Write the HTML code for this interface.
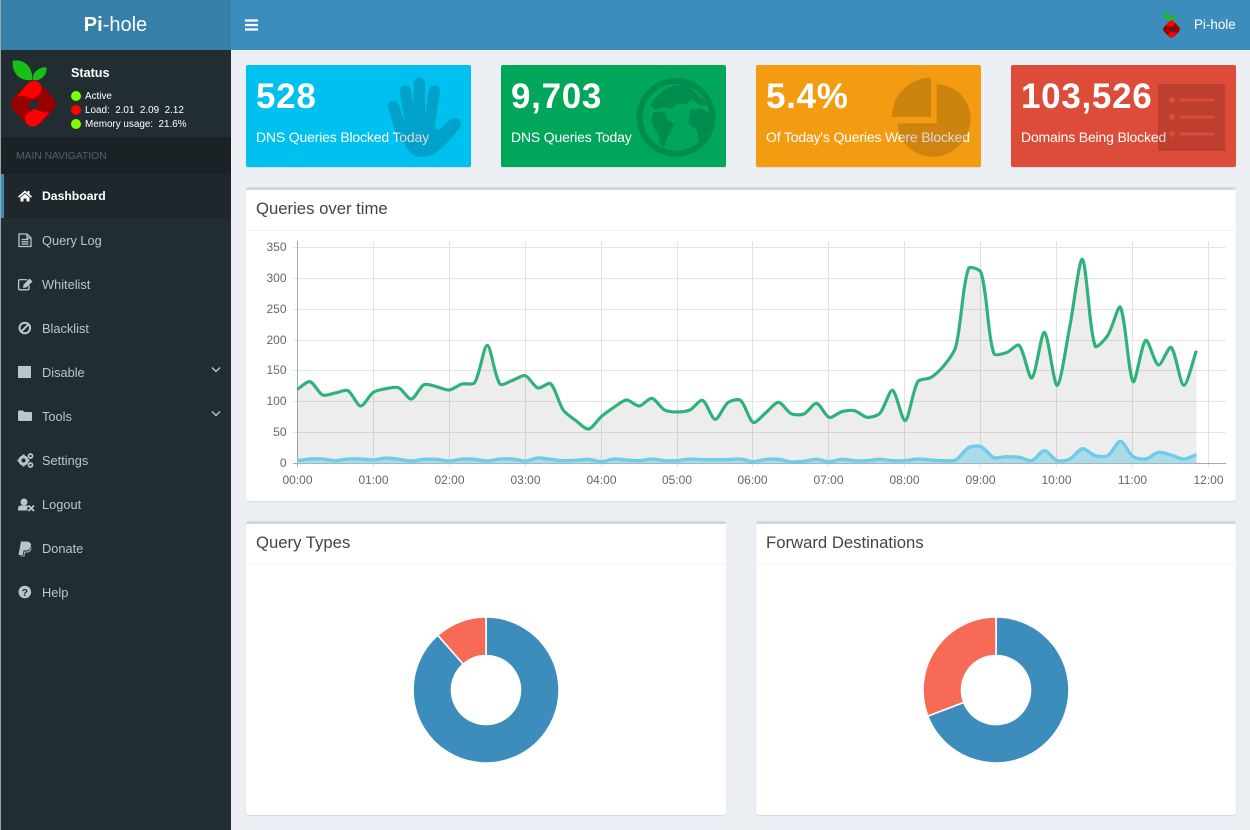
<!DOCTYPE html>
<html><head><meta charset="utf-8"><title>Pi-hole</title>
<style>
html,body{margin:0;padding:0;width:1250px;height:830px;overflow:hidden;background:#ecf0f5;font-family:"Liberation Sans",sans-serif}
div,span{position:absolute;white-space:nowrap}
#hdl{left:0;top:0;width:231px;height:50px;background:#367fa9}
#hdr{left:231px;top:0;width:1019px;height:50px;background:#3c8dbc}
#side{left:0;top:50px;width:231px;height:780px;background:#222d32}
#strip{left:0;top:0;width:1px;height:830px;background:#9aa3a8}
.brand{left:0;top:0;width:231px;text-align:center;line-height:50px;font-size:20px;color:#fff}
.nav{left:0;width:231px;height:44px;line-height:45px;font-size:12.8px;color:#b8c7ce;text-indent:42px}
.nav.a{background:#1e282c;color:#fff;font-weight:700;font-size:12.2px}
.card{top:65px;width:225px;height:102px;border-radius:2px;box-shadow:0 1px 1px rgba(0,0,0,.1);color:#fff}
.num{left:10px;top:12px;font-size:35px;line-height:40px;font-weight:700;letter-spacing:.7px}
.lbl{left:10px;top:63px;font-size:14px;line-height:18px;letter-spacing:-.17px}
.box{background:#fff;border-top:3px solid #d2d6de;border-radius:3px;box-shadow:0 1px 1px rgba(0,0,0,.1)}
.ttl{left:10px;top:9px;font-size:16.7px;line-height:20px;color:#444}
.hl{left:0;right:0;height:1px;background:#f4f4f4}
.st{left:85px;color:#fff;font-size:9.9px;line-height:12px;white-space:pre;font-weight:400;top:0}
.dot{left:71px;width:10px;height:10px;border-radius:50%}
svg{position:absolute;overflow:visible}
</style></head><body>
<div id="hdl"><div class="brand"><b>Pi</b>-hole</div></div>
<div id="hdr"></div>
<div id="side"></div>
<div id="strip"></div>

<svg style="left:245px;top:19px" width="14" height="12"><path d="M0 1.500h13M0 6h13M0 10.500h13" stroke="#fff" stroke-width="2.200"/></svg>
<div style="left:1194px;top:0;line-height:50px;font-size:13.4px;color:#fff">Pi-hole</div>

<svg width="0" height="0" style="left:0;top:0"><defs>
<g id="logo">
<path d="M38 32C75 25 100 55 96 90C60 95 35 70 38 32Z" fill="#17c017"/>
<path d="M140 52C115 50 96 70 98 90C124 94 140 76 140 52Z" fill="#17c017"/>
<rect x="44" y="106" width="112" height="112" rx="30" transform="rotate(45 100 162)" fill="#990000"/>
<path d="M52 138L84 100C96 88 114 90 122 104C130 120 120 136 104 142L97 148C85 140 70 136 52 138Z" fill="#ff0000"/>
<path d="M148 188L116 222C104 234 86 232 78 218C70 202 80 188 96 182L103 176C115 184 130 188 148 188Z" fill="#ff0000"/>
<path d="M100 146C106 152 112 155 119 158C113 165 112 172 113 178C107 177 96 176 90 180C90 172 87 165 84 160C90 157 96 152 100 146Z" fill="#2a2d30"/>
</g></defs></svg>
<svg style="left:0;top:50px" width="70" height="90" viewBox="0 0 210 270"><use href="#logo"/></svg>
<svg style="left:1159px;top:9.250px" width="26.250" height="33.750" viewBox="0 0 210 270"><use href="#logo"/></svg>

<div style="left:71px;top:64.500px;font-size:12.600px;font-weight:700;line-height:16px;color:#fff">Status</div>
<div class="dot" style="top:91px;background:#7fff00"></div>
<div class="dot" style="top:105px;background:#f00"></div>
<div class="dot" style="top:119px;background:#7fff00"></div>
<div class="st" style="top:91px">Active</div>
<div class="st" style="top:105px">Load:  2.01  2.09  2.12</div>
<div class="st" style="top:119px">Memory usage:  21.6%</div>

<div style="left:1px;top:137px;width:230px;height:37px;background:#1a2226;line-height:39px;font-size:10.300px;color:#4b646f;text-indent:15px">MAIN NAVIGATION</div>
<div class="nav a" style="top:174px;left:1px;width:230px;text-indent:41px">Dashboard</div>
<div style="left:1px;top:174px;width:3px;height:44px;background:#3c8dbc"></div>
<div class="nav" style="top:218px">Query Log</div>
<div class="nav" style="top:262px">Whitelist</div>
<div class="nav" style="top:306px">Blacklist</div>
<div class="nav" style="top:350px">Disable</div>
<div class="nav" style="top:394px">Tools</div>
<div class="nav" style="top:438px">Settings</div>
<div class="nav" style="top:482px">Logout</div>
<div class="nav" style="top:526px">Donate</div>
<div class="nav" style="top:570px">Help</div>

<svg style="left:0;top:0" width="231" height="620">
<path d="M25 190.500L18 196.500L19 197.700L25 192.700L31 197.700L32 196.500L29.500 194.400V191H27.500V192.700ZM20.500 197.500V201.500H23.500V198.500H26.500V201.500H29.500V197.500L25 193.800Z" fill="#fff"/>
<g fill="none" stroke="#b8c7ce" stroke-width="1.300">
<path d="M19 234H27L31 238V246.500H19ZM27 234V238H31M21.500 239.500H28.500M21.500 241.800H28.500M21.500 244H28.500"/>
<path d="M29 285V288.200Q29 289.800 27.300 289.800H20Q18.600 289.800 18.600 288.200V281Q18.600 279.600 20 279.600H27"/>
<circle cx="24.800" cy="328" r="5.300" stroke-width="2"/><path d="M21 331.800L28.600 324.200" stroke-width="2"/>
<path d="M212 367.500L216 371.500L220 367.500M212 411.500L216 415.500L220 411.500" stroke-width="1.400"/>
</g>
<g fill="#b8c7ce">
<path d="M23 288L23.600 284.600L29.500 278.500L32.500 281.500L26.400 287.400Z"/>
<rect x="18" y="366" width="13" height="12"/>
<path d="M18 411.500Q18 410.500 19 410.500H23L24.500 412H31Q32 412 32 413V420Q32 421 31 421H19Q18 421 18 420Z"/>
<circle cx="23.500" cy="460.500" r="3.600" fill="none" stroke="#b8c7ce" stroke-width="3"/>
<path d="M22.500 454.500h2v2h-2zM22.500 464.500h2v2h-2zM17.500 459.500h2v2h-2zM27.500 459.500h2v2h-2z"/>
<circle cx="30.500" cy="456" r="2" fill="none" stroke="#b8c7ce" stroke-width="1.700"/>
<circle cx="30.500" cy="465" r="2" fill="none" stroke="#b8c7ce" stroke-width="1.700"/>
<circle cx="24" cy="502" r="3.500"/>
<path d="M18 510.500V508.500Q18 505.500 21 505.500H27Q28.500 505.500 29 506.500L27 508L28 510.500Z"/>
<path d="M28.500 505.500L34 511M34 505.500L28.500 511" stroke="#b8c7ce" stroke-width="1.800"/>
<path d="M21 541.500H27Q31.500 542 31 546Q30 550.500 25.500 550.500H23.500L22.700 555H18.500Z"/>
<path d="M20.500 555.500H23.500L24.300 551.500H26Q30.500 551 31.200 546.800Q32 549 30.500 551Q29 552.800 26 552.800H25.200L24.500 556.500H20.200Z" opacity=".8"/>
<circle cx="24.800" cy="592" r="6.300"/>
</g>
<text x="24.800" y="595.800" font-family="Liberation Sans" font-size="10.500" font-weight="700" fill="#222d32" text-anchor="middle">?</text>
</svg>

<div class="card" style="left:246px;background:#00c0ef"><div class="num">528</div><div class="lbl">DNS Queries Blocked Today</div></div>
<div class="card" style="left:501px;background:#00a65a"><div class="num">9,703</div><div class="lbl">DNS Queries Today</div></div>
<div class="card" style="left:756px;background:#f39c12"><div class="num">5.4%</div><div class="lbl">Of Today's Queries Were Blocked</div></div>
<div class="card" style="left:1011px;background:#dd4b39"><div class="num">103,526</div><div class="lbl">Domains Being Blocked</div></div>

<svg style="left:240px;top:55px" width="500" height="120" viewBox="0 0 1500 360">
<g opacity=".15">
<g stroke="#000" stroke-width="34" stroke-linecap="round" fill="none">
<path d="M460 155L490 245M496 108L516 230M538 85V230M583 108L565 230M646 206L590 258"/>
</g>
<path d="M458 170L488 250C500 290 520 306 545 306C585 306 615 275 660 218L632 192L595 225L575 215L500 215L480 215Z" fill="#000"/>
<path fill-rule="evenodd" fill="#000" d="M1308 69A118 118 0 1 0 1308.100 69ZM1308 87A100 100 0 1 1 1307.900 87Z"/>
<path fill="#000" d="M1232 150C1245 125 1275 98 1310 90L1345 92L1395 140L1402 152L1378 150L1352 132L1340 148L1312 146L1296 160L1268 155L1245 165ZM1240 172L1272 170L1283 195L1304 208L1285 240L1272 278L1260 270L1255 240L1240 215L1234 195ZM1350 165L1385 160L1420 182L1415 235L1390 270L1378 268L1370 225L1345 205Z"/>
</g>
</svg>
<svg style="left:750px;top:55px" width="500" height="120" viewBox="0 0 1500 360">
<g opacity=".15" fill="#000">
<path d="M543 68V186H426C426 120 478 68 543 68Z"/>
<path d="M560 88C616 88 662 134 662 190C662 254 610 305 550 305C492 305 443 262 443 205H560Z"/>
<path fill-rule="evenodd" d="M1224 87H1426V288H1224ZM1290 131H1393V140H1290ZM1290 182H1393V191H1290ZM1290 233H1393V242H1290ZM1257 135A9 9 0 1 0 1275 135A9 9 0 1 0 1257 135ZM1257 186A9 9 0 1 0 1275 186A9 9 0 1 0 1257 186ZM1257 237A9 9 0 1 0 1275 237A9 9 0 1 0 1257 237Z"/>
</g>
</svg>

<div class="box" style="left:246px;top:187px;width:990px;height:311px"><div class="ttl">Queries over time</div><div class="hl" style="top:40px"></div></div>
<div class="box" style="left:246px;top:521px;width:480px;height:291px"><div class="ttl">Query Types</div><div class="hl" style="top:40px"></div></div>
<div class="box" style="left:756px;top:521px;width:480px;height:291px"><div class="ttl">Forward Destinations</div><div class="hl" style="top:40px"></div></div>

<svg style="left:0;top:0" width="1250" height="830" font-family="Liberation Sans" font-size="12" fill="#666">
<g stroke="#e5e5e5" stroke-width="1">
<path d="M293 247.500H1226M293 278.500H1226M293 309.500H1226M293 340.500H1226M293 370.500H1226M293 401.500H1226M293 432.500H1226"/>
</g>
<g stroke="#e2e2e2" stroke-width="1">
<path d="M373.500 241V467M449.500 241V467M525.500 241V467M601.500 241V467M677.500 241V467M752.500 241V467M828.500 241V467M904.500 241V467M980.500 241V467M1056.500 241V467M1132.500 241V467M1208.500 241V467"/>
</g>
<path d="M297.500 241V467M293 463.500H1226" stroke="#a8a8a8" stroke-width="1" fill="none"/>
<g transform="translate(297.300 230) scale(.33325 .33333)">
<path id="gf" fill="#000" fill-opacity=".07" d=""/>
<path id="bf" fill="#a3d8e8" fill-opacity=".9" d=""/>
<path id="gl" fill="none" stroke="#2fb27a" stroke-width="9.500" stroke-linejoin="round" d="M0 478L38 455L76 495L114 489L152 482L190 528L228 487L266 476L304 473L342 507L380 464L418 470L456 480L494 462L532 458L570 346L608 462L646 451L684 437L722 474L760 461L798 540L836 572L874 597L912 560L950 532L988 510L1026 528L1064 505L1102 540L1140 546L1178 540L1216 511L1254 568L1292 518L1330 511L1368 577L1406 548L1444 517L1482 551L1520 552L1558 520L1596 562L1634 545L1672 542L1710 562L1748 550L1786 481L1824 572L1862 455L1900 443L1938 410L1976 350L2014 116L2052 128L2090 370L2128 368L2166 346L2204 444L2242 307L2280 466L2318 290L2356 88L2394 348L2432 316L2470 232L2508 455L2546 331L2584 405L2622 352L2660 466L2698 362"/>
<path id="bl" fill="none" stroke="#6dcce8" stroke-width="10" stroke-linejoin="round" d="M0 692L38 687L76 687L114 692L152 687L190 687L228 690L266 684L304 688L342 693L380 688L418 688L456 693L494 687L532 688L570 693L608 687L646 687L684 693L722 684L760 688L798 692L836 691L874 688L912 695L950 687L988 690L1026 692L1064 687L1102 692L1140 692L1178 687L1216 689L1254 689L1292 689L1330 687L1368 695L1406 688L1444 688L1482 696L1520 694L1558 688L1596 695L1634 688L1672 692L1710 692L1748 688L1786 692L1824 692L1862 687L1900 690L1938 692L1976 690L2014 653L2052 650L2090 683L2128 680L2166 682L2204 692L2242 662L2280 692L2318 687L2356 656L2394 677L2432 677L2470 634L2508 680L2546 687L2584 667L2622 675L2660 687L2698 674"/>
</g>
<g text-anchor="end">
<text x="286.500" y="251">350</text><text x="286.500" y="282">300</text><text x="286.500" y="313">250</text><text x="286.500" y="344">200</text><text x="286.500" y="374">150</text><text x="286.500" y="405">100</text><text x="286.500" y="436">50</text><text x="286.500" y="467">0</text>
</g>
<g text-anchor="middle">
<text x="297.500" y="484">00:00</text><text x="373.500" y="484">01:00</text><text x="449.500" y="484">02:00</text><text x="525.500" y="484">03:00</text><text x="601.500" y="484">04:00</text><text x="677" y="484">05:00</text><text x="752.500" y="484">06:00</text><text x="828.500" y="484">07:00</text><text x="904.500" y="484">08:00</text><text x="980.500" y="484">09:00</text><text x="1056.500" y="484">10:00</text><text x="1132.500" y="484">11:00</text><text x="1208.500" y="484">12:00</text>
</g>
<g stroke="#fff" stroke-width="1.600" stroke-linejoin="miter">
<g transform="translate(486 690)">
<path fill="#3c8dbc" d="M0 -73A73 73 0 1 1 -48.200 -54.800L-22.800 -25.900A34.500 34.500 0 1 0 0 -34.500Z"/>
<path fill="#f76b56" d="M-48.200 -54.800A73 73 0 0 1 0 -73V-34.500A34.500 34.500 0 0 0 -22.800 -25.900Z"/>
</g>
<g transform="translate(996 690)">
<path fill="#3c8dbc" d="M0 -73A73 73 0 1 1 -68.200 26.100L-32.200 12.400A34.500 34.500 0 1 0 0 -34.500Z"/>
<path fill="#f76b56" d="M-68.200 26.100A73 73 0 0 1 0 -73V-34.500A34.500 34.500 0 0 0 -32.200 12.400Z"/>
</g>
</g>
</svg>

<script>
(function(){
function pts(id){return document.getElementById(id).getAttribute('d').slice(1).split('L').map(function(s){return s.trim().split(' ').map(Number)})}
function smooth(p){
 var c=[],t=0.28,i;
 for(i=0;i<p.length;i++){
  var a=p[Math.max(i-1,0)],b=p[i],n=p[Math.min(i+1,p.length-1)];
  var d1=Math.hypot(b[0]-a[0],b[1]-a[1]),d2=Math.hypot(n[0]-b[0],n[1]-b[1]),s=d1+d2||1;
  var f1=t*d1/s,f2=t*d2/s;
  c.push([[b[0]-f1*(n[0]-a[0]),b[1]-f1*(n[1]-a[1])],[b[0]+f2*(n[0]-a[0]),b[1]+f2*(n[1]-a[1])]]);
 }
 var d='M'+p[0][0]+' '+p[0][1];
 for(i=1;i<p.length;i++){
  d+='C'+c[i-1][1][0].toFixed(1)+' '+c[i-1][1][1].toFixed(1)+' '+c[i][0][0].toFixed(1)+' '+c[i][0][1].toFixed(1)+' '+p[i][0]+' '+p[i][1];
 }
 return d;
}
[['gl','gf'],['bl','bf']].forEach(function(k){
 var d=smooth(pts(k[0]));
 document.getElementById(k[0]).setAttribute('d',d);
 document.getElementById(k[1]).setAttribute('d',d+'L2698 700L0 700Z');
});
})();
</script>
</body></html>
